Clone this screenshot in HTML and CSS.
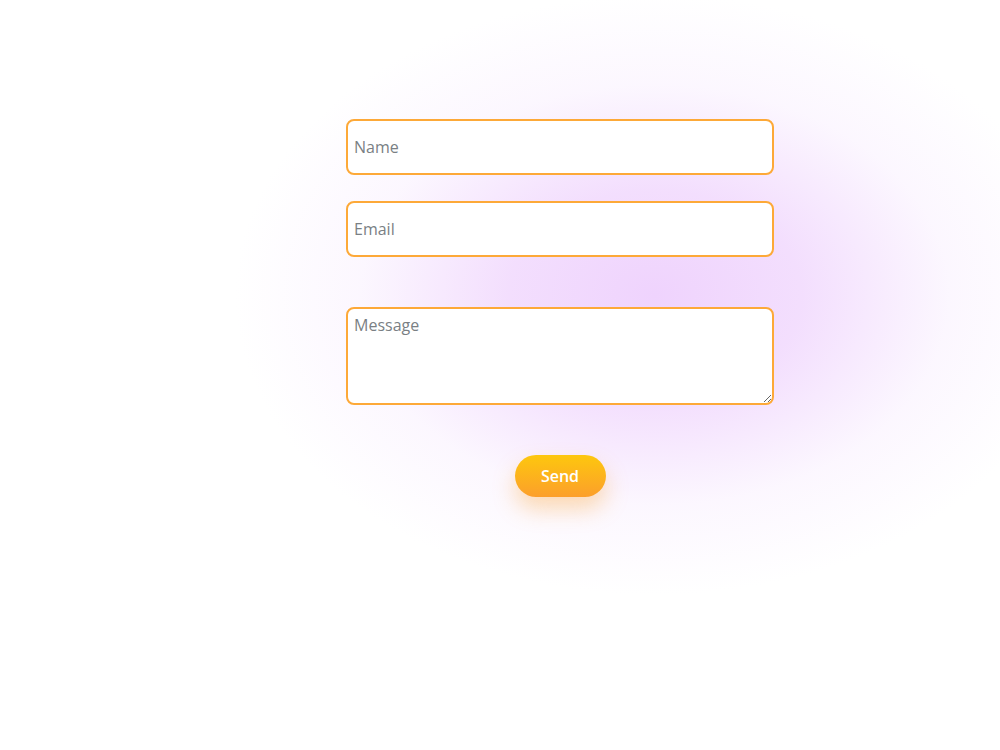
FILE: index.html
```html
<!DOCTYPE html>
<html lang="en">
<head>
	<meta charset="UTF-8">
	<title>Contact</title>
	<link rel="stylesheet" href="styles.css">
</head>
<body>
	<div class="main">
		<form class="contact">
			<input type="text" class="field" placeholder="Name">
			<input type="email" class="field field-email" placeholder="Email">
			<textarea class="field field-msg" placeholder="Message"></textarea>
			<button type="button" class="btnSend">Send</button>
		</form>
	</div>
</body>
</html>
```
FILE: styles.css
```css
*{
	padding: 0;
	margin: 0;
	box-sizing: border-box;
}
html,body{
	height: 100%;
}
body{
	font-family: "Open Sans", "Noto Sans", sans-serif;
	background: radial-gradient(ellipse 420px 300px at 655px 295px, #efd3fd 0%, rgba(240,214,253,0.8) 35%, rgba(246,232,254,0.35) 70%, #fff 100%);
	background-color: #fff;
}
.main{
	padding: 119px 0 0 346px;
}
.contact{
	width: 428px;
	display: flex;
	flex-direction: column;
}
.field{
	width: 100%;
	height: 56px;
	border: 2px solid #fda938;
	border-radius: 8px;
	background: #fff;
	padding: 0 6px;
	font-family: inherit;
	font-size: 16px;
	color: #555;
	outline: none;
}
.field::placeholder{
	color: #7a7f84;
}
.field-email{
	margin-top: 26px;
}
.field-msg{
	margin-top: 50px;
	height: 98px;
	padding: 5px 6px;
	resize: vertical;
}
.btnSend{
	align-self: center;
	margin-top: 50px;
	width: 91px;
	height: 42px;
	border: none;
	border-radius: 21px;
	background: linear-gradient(#fdc70e, #fc9f2b);
	color: #fff;
	font-family: inherit;
	font-size: 16px;
	font-weight: 600;
	box-shadow: 0 12px 22px rgba(252,160,40,0.35);
	cursor: pointer;
}
```
